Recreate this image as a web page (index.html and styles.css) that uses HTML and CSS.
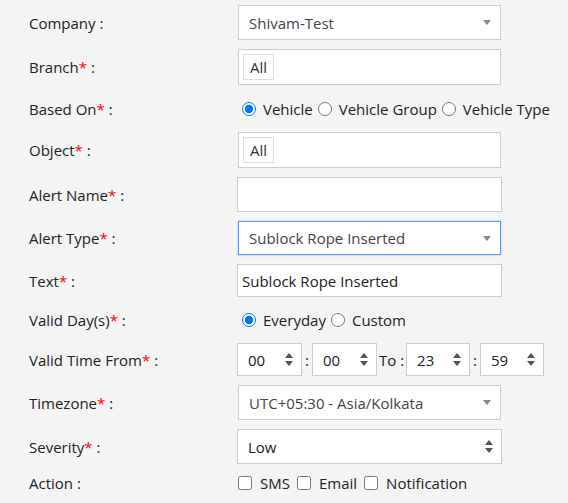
FILE: index.html
```html
<!DOCTYPE html>
<html lang="en">
  <head>
    <meta charset="UTF-8" />
    <title>Alert</title>
    <link rel="stylesheet" href="styles.css">
  </head>
  <body>
    <div class="form">
      <div class="row">
        <label class="caption">Company :</label>
        <div class="select2">
          <span>Shivam-Test</span>
          <span class="caret"></span>
        </div>
      </div>

      <div class="row">
        <label class="caption">Branch<span class="req">*</span> :</label>
        <div class="tags"><span class="tag">All</span></div>
      </div>

      <div class="row">
        <label class="caption">Based On<span class="req">*</span> :</label>
        <div class="options">
          <label class="option"><input type="radio" name="based" checked />Vehicle</label>
          <label class="option"><input type="radio" name="based" />Vehicle Group</label>
          <label class="option"><input type="radio" name="based" />Vehicle Type</label>
        </div>
      </div>

      <div class="row">
        <label class="caption">Object<span class="req">*</span> :</label>
        <div class="tags"><span class="tag">All</span></div>
      </div>

      <div class="row">
        <label class="caption">Alert Name<span class="req">*</span> :</label>
        <input class="text" />
      </div>

      <div class="row">
        <label class="caption">Alert Type<span class="req">*</span> :</label>
        <div class="select2 focused">
          <span>Sublock Rope Inserted</span>
          <span class="caret"></span>
        </div>
      </div>

      <div class="row">
        <label class="caption">Text<span class="req">*</span> :</label>
        <input class="text short" value="Sublock Rope Inserted" />
      </div>

      <div class="row">
        <label class="caption">Valid Day(s)<span class="req">*</span> :</label>
        <div class="options days">
          <label class="option"><input type="radio" name="days" checked />Everyday</label>
          <label class="option"><input type="radio" name="days" />Custom</label>
        </div>
      </div>

      <div class="row">
        <label class="caption">Valid Time From<span class="req">*</span> :</label>
        <div class="time">
          <div class="picker"><span>00</span><span class="spin"></span></div>
          <span class="sep">:</span>
          <div class="picker"><span>00</span><span class="spin"></span></div>
          <span class="sep to">To :</span>
          <div class="picker narrow"><span>23</span><span class="spin"></span></div>
          <span class="sep">:</span>
          <div class="picker narrow"><span>59</span><span class="spin"></span></div>
        </div>
      </div>

      <div class="row">
        <label class="caption">Timezone<span class="req">*</span> :</label>
        <div class="select2">
          <span>UTC+05:30 - Asia/Kolkata</span>
          <span class="caret"></span>
        </div>
      </div>

      <div class="row">
        <label class="caption">Severity<span class="req">*</span> :</label>
        <div class="native">
          <span>Low</span>
          <span class="spin"></span>
        </div>
      </div>

      <div class="row">
        <label class="caption">Action :</label>
        <div class="checks">
          <label class="option"><input type="checkbox" />SMS</label>
          <label class="option"><input type="checkbox" />Email</label>
          <label class="option"><input type="checkbox" />Notification</label>
        </div>
      </div>
    </div>
  </body>
</html>
```

FILE: styles.css
```css
body {
  margin: 0;
  background: #f4f4f4;
  font-family: "Open Sans", sans-serif;
  font-size: 15px;
  color: #222;
}

.form {
  padding: 5px 0 0 29px;
}

.row {
  display: flex;
  align-items: center;
  margin-bottom: 9px;
}

.caption {
  width: 208px;
}

.req {
  color: #f00;
}

.select2 {
  box-sizing: border-box;
  width: 263px;
  height: 35px;
  margin-left: 1px;
  padding: 0 9px 0 10px;
  display: flex;
  align-items: center;
  justify-content: space-between;
  background: #fff;
  border: 1px solid #ccc;
  color: #444;
}

.select2.focused {
  height: 34px;
  border-color: #5897fb;
  box-shadow: 0 0 2px rgba(88, 151, 251, 0.6);
}

.caret {
  width: 0;
  height: 0;
  border-left: 4px solid transparent;
  border-right: 4px solid transparent;
  border-top: 5px solid #888;
}

.tags {
  box-sizing: border-box;
  width: 263px;
  height: 36px;
  margin-left: 1px;
  padding: 4px;
  display: flex;
  align-items: flex-start;
  background: #fff;
  border: 1px solid #ccc;
}

.tag {
  padding: 0 6px;
  line-height: 24px;
  border: 1px solid #ddd;
  color: #333;
}

.text {
  box-sizing: border-box;
  width: 265px;
  height: 35px;
  padding: 0 4px;
  border: 1px solid #ccc;
  background: #fff;
  font: inherit;
  color: #222;
  outline: none;
}

.text.short {
  height: 33px;
}

.options {
  height: 29px;
  padding-left: 5px;
  display: flex;
  align-items: center;
}

.options.days {
  height: 28px;
}

.option {
  display: flex;
  align-items: center;
  margin-right: 5px;
}

.options input {
  width: 14px;
  height: 14px;
  margin: 0 7px 0 0;
}

.time {
  display: flex;
  align-items: center;
}

.picker,
.native {
  box-sizing: border-box;
  height: 33px;
  padding: 0 8px 0 10px;
  display: flex;
  align-items: center;
  justify-content: space-between;
  background: #fff;
  border: 1px solid #ccc;
}

.picker {
  width: 65px;
}

.picker.narrow {
  width: 64px;
}

.native {
  width: 265px;
  height: 35px;
}

.sep {
  margin: 0 3px;
}

.sep.to {
  margin: 0 2px;
}

.spin {
  display: flex;
  flex-direction: column;
  gap: 3px;
}

.spin::before,
.spin::after {
  content: "";
  width: 0;
  height: 0;
  border-left: 4px solid transparent;
  border-right: 4px solid transparent;
}

.spin::before {
  border-bottom: 5px solid #555;
}

.spin::after {
  border-top: 5px solid #555;
}

.checks {
  height: 18px;
  padding-left: 1px;
  display: flex;
  align-items: center;
}

.checks .option {
  margin-right: 7px;
}

.checks input {
  width: 14px;
  height: 14px;
  margin: 0 8px 0 0;
}
```
